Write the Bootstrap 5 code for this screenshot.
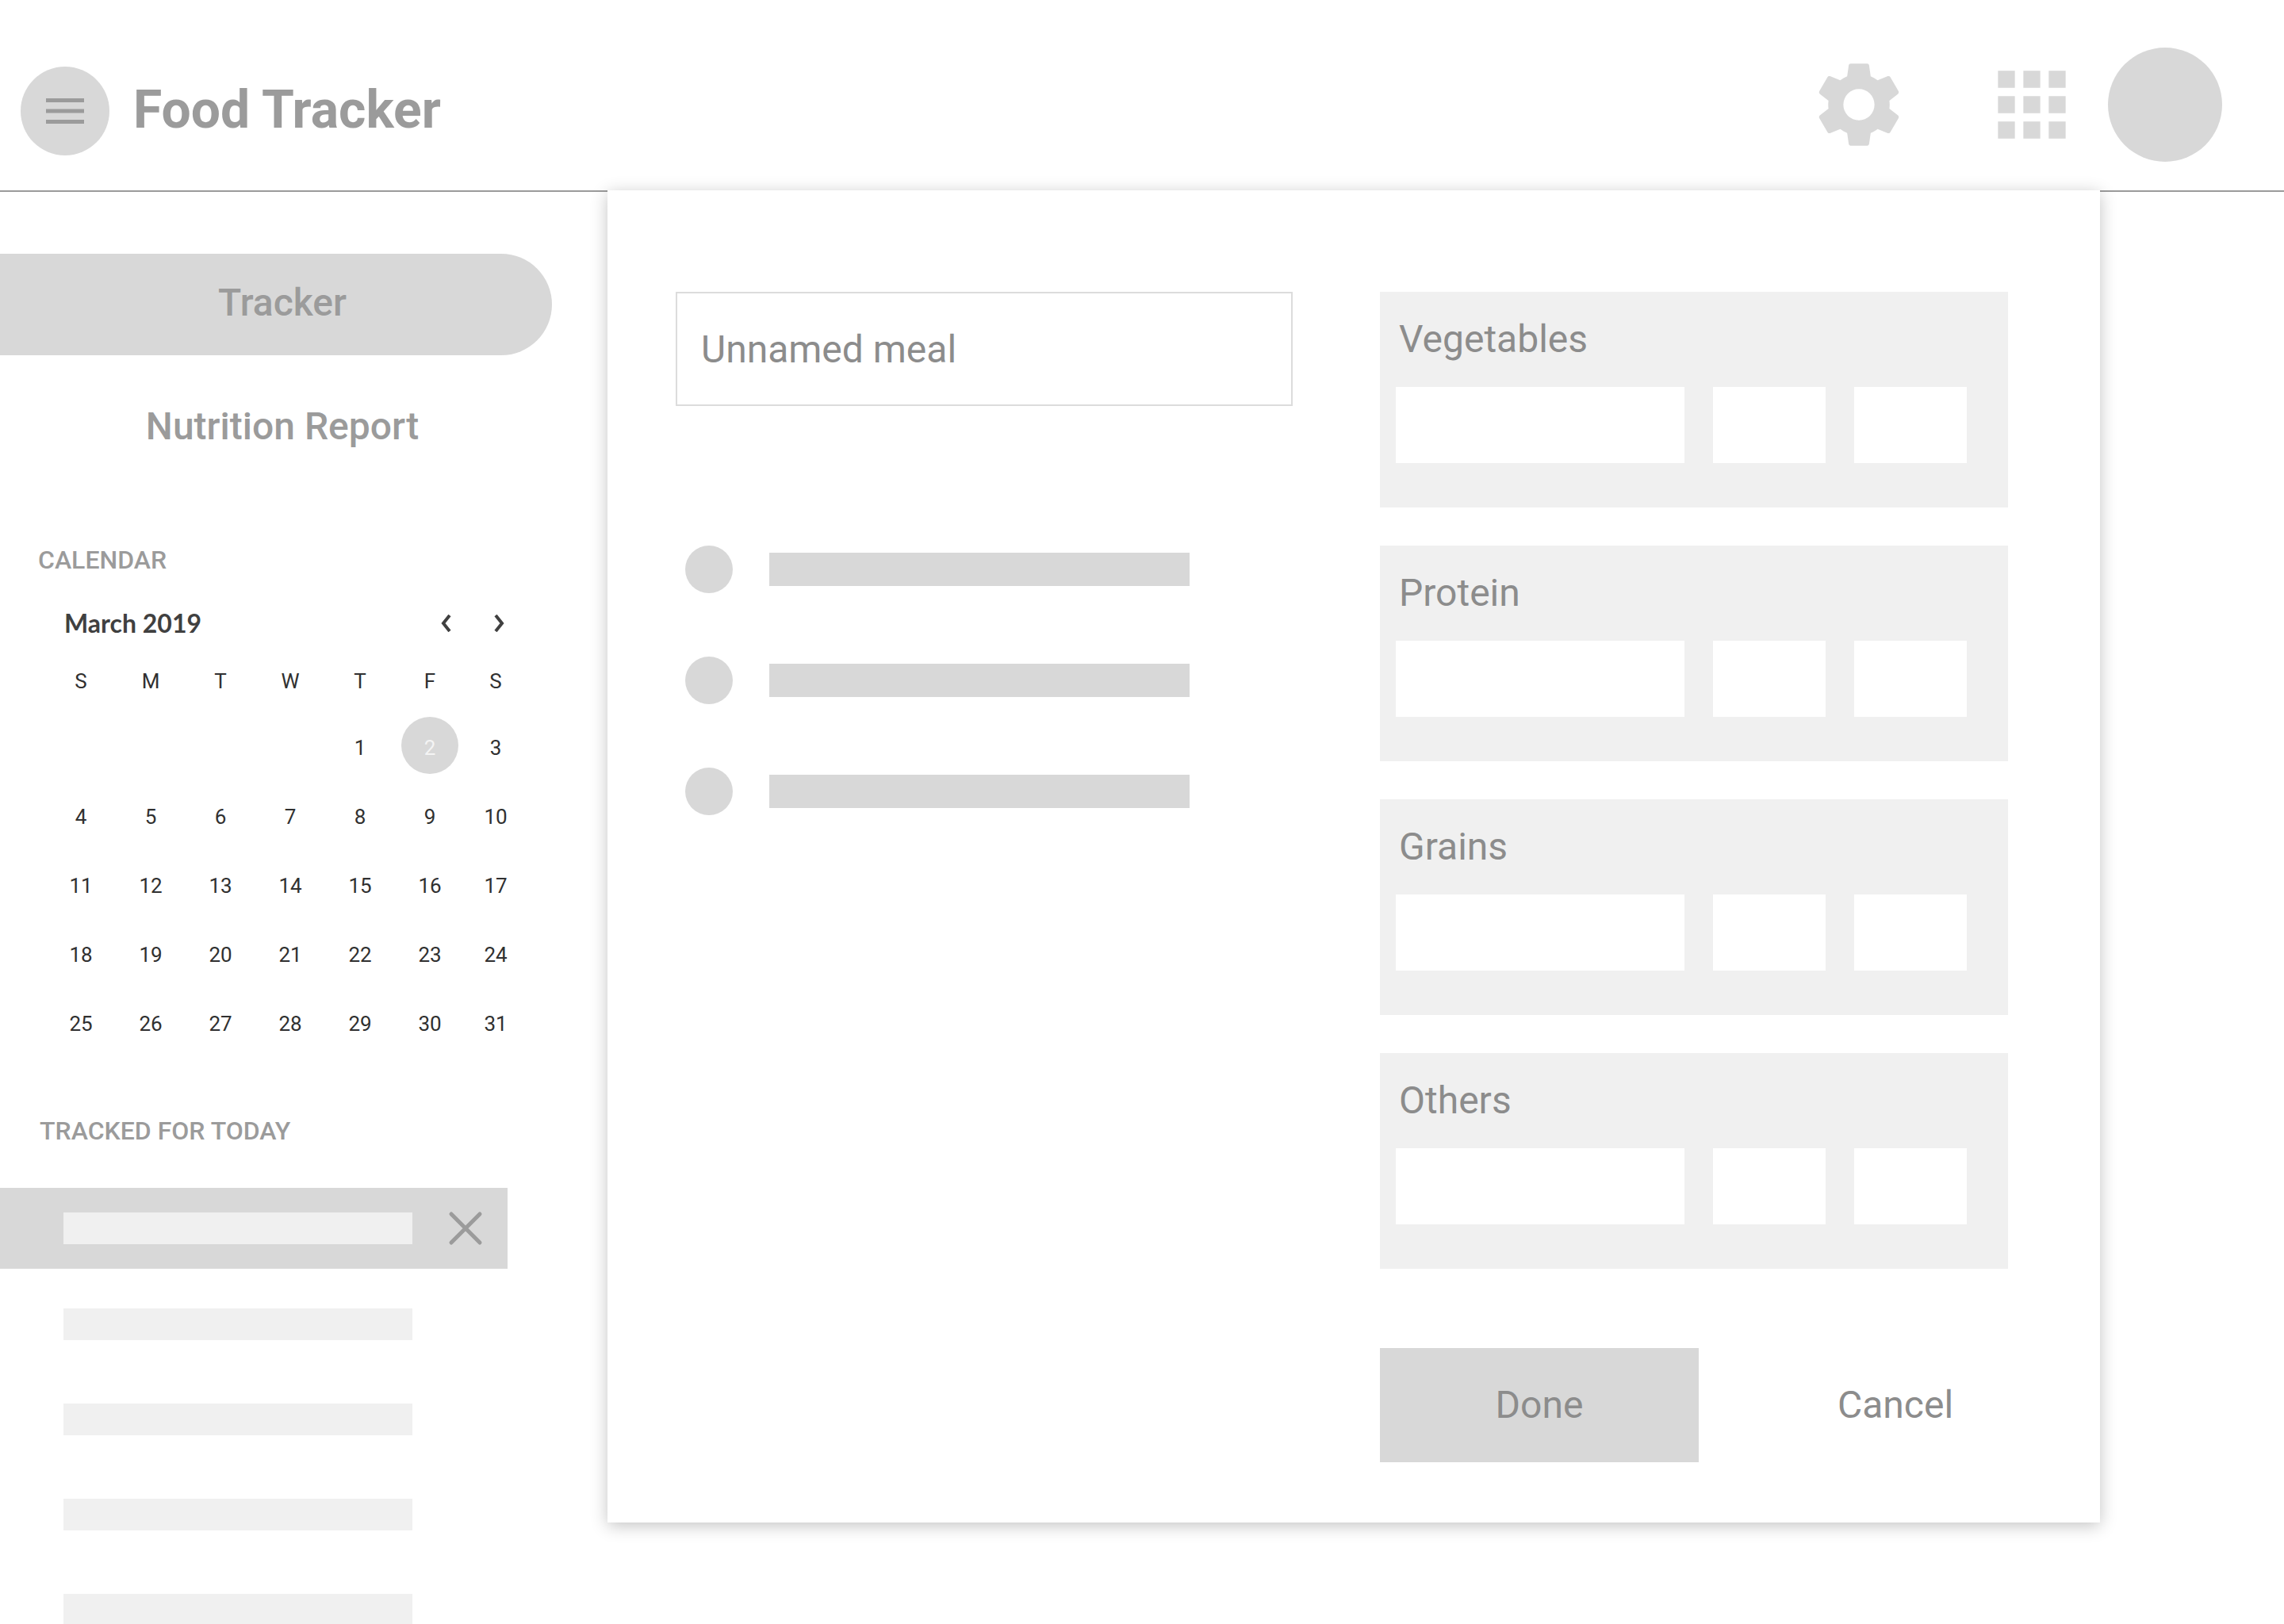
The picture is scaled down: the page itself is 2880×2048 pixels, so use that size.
<!DOCTYPE html>
<html lang="en">
<head>
<meta charset="utf-8">
<meta name="viewport" content="width=device-width, initial-scale=1">
<title>Food Tracker</title>
<link rel="stylesheet" href="https://cdn.jsdelivr.net/npm/bootstrap@5.3.0/dist/css/bootstrap.min.css">
<style>
  :root { --fill: #d8d8d8; --soft: #f0f0f0; --muted: #9b9b9b; --label: #8c8c8c; }
  body { font-family: Roboto, "Liberation Sans", sans-serif; font-size: 48px; line-height: 56px; color: var(--label); }
  .btn { --bs-btn-border-width: 0; --bs-btn-border-radius: 0; font-size: 48px; line-height: 56px; }

  .topbar { padding: 60px 78px 36px 26px; border-bottom: 2px solid var(--muted); }
  .menu-btn { width: 112px; height: 112px; background: var(--fill); }
  .app-title { font-size: 66px; line-height: 80px; font-weight: 700; color: var(--muted); padding-bottom: 2px; margin-left: 30px; }
  .icon-gear { margin-right: 92px; }
  .icon-apps { margin-right: 32px; }
  .avatar { width: 144px; height: 144px; background: var(--fill); }

  .sidebar { width: 766px; padding-top: 78px; }
  .side-nav { gap: 28px; width: 696px; }
  .side-nav a { height: 128px; padding: 0 0 4px 16px; font-weight: 500; color: var(--muted); border-radius: 0 64px 64px 0; }
  .side-nav a.active { background: var(--fill); }
  .side-title { font-size: 32px; line-height: 40px; font-weight: 500; color: var(--muted); margin: 82px 0 0 48px; }
  .side-title.tracked { margin: 72px 0 52px 50px; }

  .cal-head { width: 650px; margin: 40px 0 12px; padding-left: 81px; color: #404040; }
  .cal-head h3 { font: 700 32px/40px Lato, sans-serif; }
  .cal-nav { gap: 28px; }
  .cal-nav .btn { width: 40px; height: 40px; color: #404040; }
  .cal { width: 606px; margin-left: 58px; table-layout: fixed; font-size: 26px; line-height: 32px; color: #303030; text-align: center; }
  .cal th { height: 81px; width: 88px; padding: 0; font-weight: 400; }
  .cal th:last-child { width: 78px; }
  .cal td { height: 87px; padding: 0; }
  .cal .btn { width: 72px; height: 72px; padding: 0; font-size: 26px; line-height: 32px; color: inherit; }
  .cal .btn.active { background: var(--fill); color: #f4f4f4; padding-top: 6px; margin-bottom: 6px; }

  .tracked-now { width: 640px; height: 102px; padding: 0 30px 0 80px; background: var(--fill); }
  .tracked-bar { width: 440px; height: 40px; background: var(--soft); }
  .tracked-list { gap: 80px; padding: 50px 0 0 80px; }

  .meal-panel { margin: -2px 232px 0 0; padding: 128px 116px 76px 86px; box-shadow: 0 4px 20px rgba(0, 0, 0, .24);
    display: grid; grid-template-columns: 778fr 792fr; column-gap: 110px; align-items: start; z-index: 1; }
  .meal-name { height: 144px; padding: 0 30px; border: 2px solid #dcdcdc; font-size: 48px; color: var(--label) !important; }
  .picks { gap: 80px; padding: 176px 0 0 12px; }
  .pick { gap: 46px; }
  .pick-dot { width: 60px; height: 60px; background: var(--fill); }
  .pick-bar { width: 530px; height: 42px; background: var(--fill); }
  .groups { gap: 48px; }
  .food-group { background: var(--soft); padding: 32px 52px 56px 20px; }
  .food-group h2 { font-size: 48px; line-height: 56px; font-weight: 400; padding-left: 4px; margin-bottom: 32px; }
  .food-row { display: grid; grid-template-columns: 364fr 142fr 142fr; gap: 36px; }
  .food-row input { height: 96px; min-width: 0; border: 0; font-size: 40px; }
  .actions { display: grid; grid-template-columns: 402fr 284fr; column-gap: 106px; margin-top: 100px; }
  .actions .btn { height: 144px; color: var(--label); }
  .actions .btn-done { background: var(--fill); }
</style>
<script src="https://cdn.jsdelivr.net/npm/bootstrap@5.3.0/dist/js/bootstrap.bundle.min.js"></script>
</head>
<body class="bg-white vh-100 overflow-hidden">
<header class="topbar d-flex align-items-center justify-content-between">
  <div class="d-flex align-items-center pt-3">
    <button type="button" class="menu-btn btn rounded-circle p-0 d-flex align-items-center justify-content-center" aria-label="Menu">
      <svg width="48" height="32" viewBox="0 0 48 32" fill="#9b9b9b"><path d="M0 0h48v5H0zM0 13.500h48v5H0zM0 27h48v5H0z"/></svg>
    </button>
    <h1 class="app-title mb-0">Food Tracker</h1>
  </div>
  <div class="d-flex align-items-center">
    <button type="button" class="icon-gear btn p-0 d-flex" aria-label="Settings">
      <svg width="124" height="124" viewBox="0 0 24 24" fill="#d8d8d8" fill-rule="evenodd"><path d="M19.43 12.98c.04-.32.07-.64.07-.98s-.03-.66-.07-.98l2.11-1.65c.19-.15.24-.42.12-.64l-2-3.46c-.12-.22-.39-.3-.61-.22l-2.49 1c-.52-.4-1.08-.73-1.69-.98l-.38-2.65C14.46 2.18 14.25 2 14 2h-4c-.25 0-.46.18-.49.42l-.38 2.65c-.61.25-1.17.59-1.69.98l-2.49-1c-.23-.09-.49 0-.61.22l-2 3.46c-.13.22-.07.49.12.64l2.11 1.65c-.04.32-.07.65-.07.98s.03.66.07.98l-2.11 1.65c-.19.15-.24.42-.12.64l2 3.46c.12.22.39.3.61.22l2.49-1c.52.4 1.08.73 1.69.98l.38 2.65c.03.24.24.42.49.42h4c.25 0 .46-.18.49-.42l.38-2.65c.61-.25 1.17-.59 1.69-.98l2.49 1c.23.09.49 0 .61-.22l2-3.46c.12-.22.07-.49-.12-.64l-2.11-1.65zM12 15.8a3.8 3.8 0 1 1 0-7.6 3.8 3.8 0 0 1 0 7.6z"/></svg>
    </button>
    <button type="button" class="icon-apps btn p-0 d-flex" aria-label="Apps">
      <svg width="128" height="128" viewBox="0 0 24 24" fill="#d8d8d8"><path d="M4 4h4v4H4zM10 4h4v4h-4zM16 4h4v4h-4zM4 10h4v4H4zM10 10h4v4h-4zM16 10h4v4h-4zM4 16h4v4H4zM10 16h4v4h-4zM16 16h4v4h-4z"/></svg>
    </button>
    <button type="button" class="avatar btn rounded-circle p-0" aria-label="Account"></button>
  </div>
</header>

<div class="d-flex align-items-start">
  <aside class="sidebar flex-shrink-0">
    <nav class="side-nav d-flex flex-column">
      <a href="#" class="active d-flex align-items-center justify-content-center text-decoration-none">Tracker</a>
      <a href="#" class="d-flex align-items-center justify-content-center text-decoration-none">Nutrition Report</a>
    </nav>

    <h2 class="side-title">CALENDAR</h2>
    <div class="cal-head d-flex align-items-center justify-content-between">
      <h3 class="mb-0">March 2019</h3>
      <div class="cal-nav d-flex">
        <button type="button" class="btn p-0 d-flex align-items-center justify-content-center" aria-label="Previous month">
          <svg width="14" height="22" viewBox="0 0 14 22" fill="none" stroke="currentColor" stroke-width="4"><path d="M12 1 4 11l8 10"/></svg>
        </button>
        <button type="button" class="btn p-0 d-flex align-items-center justify-content-center" aria-label="Next month">
          <svg width="14" height="22" viewBox="0 0 14 22" fill="none" stroke="currentColor" stroke-width="4"><path d="m2 1 8 10-8 10"/></svg>
        </button>
      </div>
    </div>
    <table class="cal">
      <thead><tr><th>S</th><th>M</th><th>T</th><th>W</th><th>T</th><th>F</th><th>S</th></tr></thead>
      <tbody class="align-middle">
        <tr><td></td><td></td><td></td><td></td><td><button class="btn">1</button></td><td><button class="btn rounded-circle active">2</button></td><td><button class="btn">3</button></td></tr>
        <tr><td><button class="btn">4</button></td><td><button class="btn">5</button></td><td><button class="btn">6</button></td><td><button class="btn">7</button></td><td><button class="btn">8</button></td><td><button class="btn">9</button></td><td><button class="btn">10</button></td></tr>
        <tr><td><button class="btn">11</button></td><td><button class="btn">12</button></td><td><button class="btn">13</button></td><td><button class="btn">14</button></td><td><button class="btn">15</button></td><td><button class="btn">16</button></td><td><button class="btn">17</button></td></tr>
        <tr><td><button class="btn">18</button></td><td><button class="btn">19</button></td><td><button class="btn">20</button></td><td><button class="btn">21</button></td><td><button class="btn">22</button></td><td><button class="btn">23</button></td><td><button class="btn">24</button></td></tr>
        <tr><td><button class="btn">25</button></td><td><button class="btn">26</button></td><td><button class="btn">27</button></td><td><button class="btn">28</button></td><td><button class="btn">29</button></td><td><button class="btn">30</button></td><td><button class="btn">31</button></td></tr>
      </tbody>
    </table>

    <h2 class="side-title tracked">TRACKED FOR TODAY</h2>
    <div class="tracked-now d-flex align-items-center justify-content-between">
      <div class="tracked-bar"></div>
      <button type="button" class="btn p-0 d-flex" aria-label="Remove">
        <svg width="46" height="46" viewBox="0 0 46 46" stroke="#9b9b9b" stroke-width="5" stroke-linecap="round"><path d="m5 5 36 36M41 5 5 41"/></svg>
      </button>
    </div>
    <div class="tracked-list d-flex flex-column">
      <div class="tracked-bar"></div>
      <div class="tracked-bar"></div>
      <div class="tracked-bar"></div>
      <div class="tracked-bar"></div>
    </div>
  </aside>

  <main class="meal-panel bg-white flex-grow-1 position-relative">
    <section>
      <input type="text" class="meal-name form-control rounded-0" value="Unnamed meal" aria-label="Meal name">
      <div class="picks d-flex flex-column">
        <div class="pick d-flex align-items-center"><div class="pick-dot rounded-circle"></div><div class="pick-bar"></div></div>
        <div class="pick d-flex align-items-center"><div class="pick-dot rounded-circle"></div><div class="pick-bar"></div></div>
        <div class="pick d-flex align-items-center"><div class="pick-dot rounded-circle"></div><div class="pick-bar"></div></div>
      </div>
    </section>

    <form>
      <div class="groups d-flex flex-column">
        <div class="food-group" role="group" aria-labelledby="g-veg">
          <h2 id="g-veg">Vegetables</h2>
          <div class="food-row"><input type="text" class="form-control rounded-0" aria-label="Vegetable"><input type="text" class="form-control rounded-0" aria-label="Vegetable amount"><input type="text" class="form-control rounded-0" aria-label="Vegetable unit"></div>
        </div>
        <div class="food-group" role="group" aria-labelledby="g-protein">
          <h2 id="g-protein">Protein</h2>
          <div class="food-row"><input type="text" class="form-control rounded-0" aria-label="Protein"><input type="text" class="form-control rounded-0" aria-label="Protein amount"><input type="text" class="form-control rounded-0" aria-label="Protein unit"></div>
        </div>
        <div class="food-group" role="group" aria-labelledby="g-grains">
          <h2 id="g-grains">Grains</h2>
          <div class="food-row"><input type="text" class="form-control rounded-0" aria-label="Grain"><input type="text" class="form-control rounded-0" aria-label="Grain amount"><input type="text" class="form-control rounded-0" aria-label="Grain unit"></div>
        </div>
        <div class="food-group" role="group" aria-labelledby="g-others">
          <h2 id="g-others">Others</h2>
          <div class="food-row"><input type="text" class="form-control rounded-0" aria-label="Other food"><input type="text" class="form-control rounded-0" aria-label="Other amount"><input type="text" class="form-control rounded-0" aria-label="Other unit"></div>
        </div>
      </div>
      <div class="actions">
        <button type="button" class="btn btn-done">Done</button>
        <button type="button" class="btn">Cancel</button>
      </div>
    </form>
  </main>
</div>
</body>
</html>
